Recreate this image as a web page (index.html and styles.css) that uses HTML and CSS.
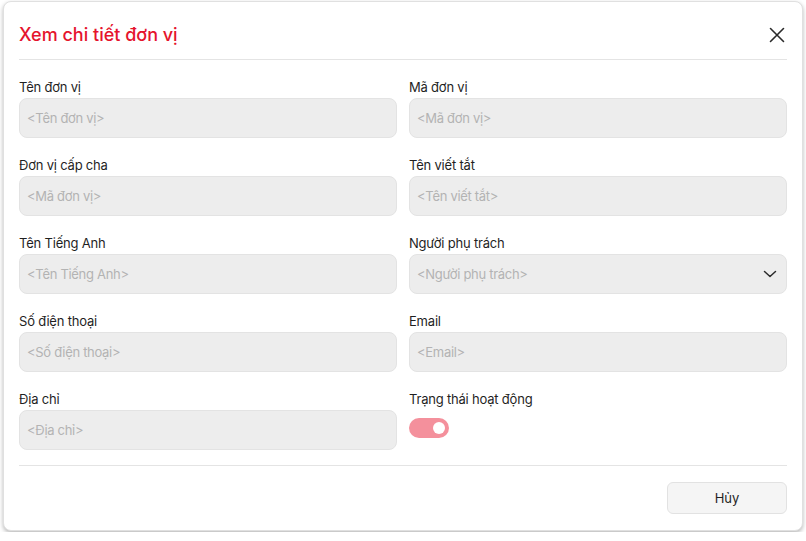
FILE: index.html
```html
<!DOCTYPE html>
<html lang="vi">
<head>
    <meta charset="UTF-8">
    <meta name="viewport" content="width=device-width, initial-scale=1.0">
    <title>Xem chi tiết đơn vị</title>
    <link rel="stylesheet" href="styles.css">
</head>
<body>
    <div class="modal">
        <div class="modal-header">
            <h2 class="modal-title">Xem chi tiết đơn vị</h2>
            <button class="close-btn" aria-label="Đóng">
                <svg width="20" height="20" viewBox="0 0 20 20">
                    <path d="M3.5 3.5 L16.5 16.5 M16.5 3.5 L3.5 16.5" stroke="#2b2b2b" stroke-width="1.6" stroke-linecap="round" fill="none"/>
                </svg>
            </button>
        </div>

        <div class="modal-body">
            <div class="form-grid">
                <div class="field">
                    <label class="field-label">Tên đơn vị</label>
                    <input class="field-input" type="text" placeholder="<Tên đơn vị>" readonly>
                </div>
                <div class="field">
                    <label class="field-label">Mã đơn vị</label>
                    <input class="field-input" type="text" placeholder="<Mã đơn vị>" readonly>
                </div>

                <div class="field">
                    <label class="field-label">Đơn vị cấp cha</label>
                    <input class="field-input" type="text" placeholder="<Mã đơn vị>" readonly>
                </div>
                <div class="field">
                    <label class="field-label">Tên viết tắt</label>
                    <input class="field-input" type="text" placeholder="<Tên viết tắt>" readonly>
                </div>

                <div class="field">
                    <label class="field-label">Tên Tiếng Anh</label>
                    <input class="field-input" type="text" placeholder="<Tên Tiếng Anh>" readonly>
                </div>
                <div class="field">
                    <label class="field-label">Người phụ trách</label>
                    <div class="field-input field-select">
                        <span class="placeholder">&lt;Người phụ trách&gt;</span>
                        <svg width="14" height="8" viewBox="0 0 14 8">
                            <path d="M1.5 1.5 L7 6.5 L12.5 1.5" stroke="#2b2b2b" stroke-width="1.5" stroke-linecap="round" stroke-linejoin="round" fill="none"/>
                        </svg>
                    </div>
                </div>

                <div class="field">
                    <label class="field-label">Số điện thoại</label>
                    <input class="field-input" type="text" placeholder="<Số điện thoại>" readonly>
                </div>
                <div class="field">
                    <label class="field-label">Email</label>
                    <input class="field-input" type="text" placeholder="<Email>" readonly>
                </div>

                <div class="field">
                    <label class="field-label">Địa chỉ</label>
                    <input class="field-input" type="text" placeholder="<Địa chỉ>" readonly>
                </div>
                <div class="field">
                    <label class="field-label">Trạng thái hoạt động</label>
                    <span class="switch is-on"><span class="switch-knob"></span></span>
                </div>
            </div>
        </div>

        <div class="modal-footer">
            <button class="btn">Hủy</button>
        </div>
    </div>
</body>
</html>
```

FILE: styles.css
```css
* {
    box-sizing: border-box;
}

body {
    margin: 0;
    background: #fff;
    font-family: Inter, 'Noto Sans', sans-serif;
    color: #1f1f1f;
}

.modal {
    width: 800px;
    margin: 1px 3px;
    background: #fff;
    border: 1px solid #e0e0e0;
    border-radius: 8px;
    box-shadow: 0 2px 4px rgba(0, 0, 0, 0.28);
}

.modal-header {
    display: flex;
    align-items: center;
    justify-content: space-between;
    margin: 0 15px;
    padding: 19px 0 10px;
    border-bottom: 1px solid #e4e4e4;
}

.modal-title {
    margin: 0;
    font-size: 18px;
    line-height: 28px;
    font-weight: 500;
    color: #e5142d;
}

.close-btn {
    display: flex;
    padding: 0;
    border: none;
    background: none;
    cursor: pointer;
}

.modal-body {
    padding: 16px 15px 15px;
}

.form-grid {
    display: grid;
    grid-template-columns: 1fr 1fr;
    column-gap: 12px;
    row-gap: 16px;
}

.field {
    display: flex;
    flex-direction: column;
    align-items: flex-start;
}

.field-label {
    font-size: 13px;
    line-height: 22px;
    letter-spacing: -0.2px;
    color: #1f1f1f;
}

.field-input {
    width: 100%;
    height: 40px;
    padding: 0 7px;
    border: 1px solid #e3e3e3;
    border-radius: 8px;
    background: #ededed;
    font-family: inherit;
    font-size: 13px;
    letter-spacing: -0.3px;
    color: #1f1f1f;
    outline: none;
}

.field-input::placeholder,
.placeholder {
    color: #b3b3b3;
}

.field-select {
    display: flex;
    align-items: center;
    justify-content: space-between;
    padding-right: 9px;
}

.switch {
    display: flex;
    align-items: center;
    justify-content: flex-end;
    width: 40px;
    height: 20px;
    margin-top: 8px;
    padding: 0 4px;
    border-radius: 10px;
    background: #d0d0d0;
}

.switch.is-on {
    background: #f4909c;
}

.switch-knob {
    width: 12px;
    height: 12px;
    border-radius: 50%;
    background: #fff;
}

.modal-footer {
    display: flex;
    justify-content: flex-end;
    margin: 0 15px;
    padding: 16px 0;
    border-top: 1px solid #e4e4e4;
}

.btn {
    width: 120px;
    height: 32px;
    border: 1px solid #e2e2e2;
    border-radius: 6px;
    background: #f5f5f5;
    font-family: inherit;
    font-size: 13px;
    color: #1f1f1f;
    cursor: pointer;
}
```
